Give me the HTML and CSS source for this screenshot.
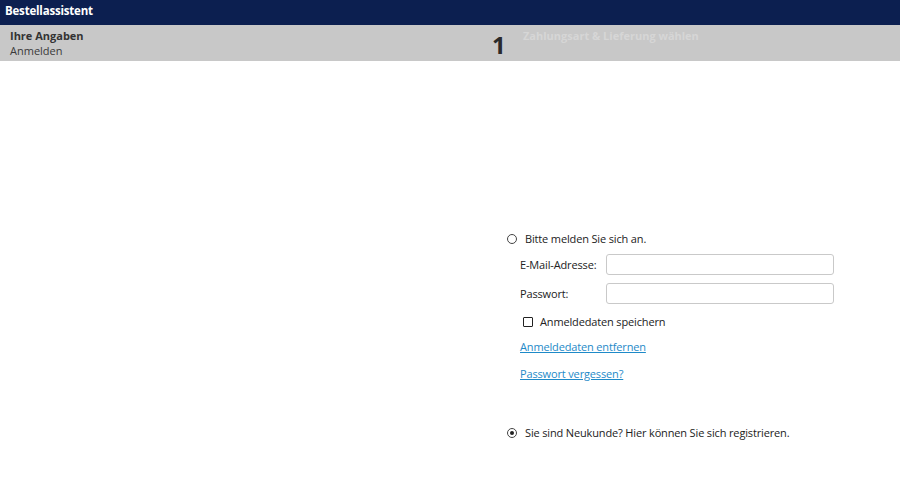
FILE: index.html
```html
<!DOCTYPE html>
<html lang="de">
<head>
<meta charset="utf-8">
<title>Bestellassistent</title>
<link rel="stylesheet" href="styles.css">
</head>
<body>
<header class="titlebar">Bestellassistent</header>
<nav class="steps">
  <div class="step current">
    <div class="step-title">Ihre Angaben</div>
    <div class="step-sub">Anmelden</div>
  </div>
  <div class="step-num">1</div>
  <div class="step next">
    <div class="step-title">Zahlungsart &amp; Lieferung wählen</div>
  </div>
</nav>
<main class="main">
  <div class="spacer"></div>
  <div class="form">
    <label class="option">
      <span class="radio"></span>
      <span>Bitte melden Sie sich an.</span>
    </label>
    <div class="fields">
      <div class="field">
        <span class="field-label">E-Mail-Adresse:</span>
        <span class="input"></span>
      </div>
      <div class="field">
        <span class="field-label">Passwort:</span>
        <span class="input"></span>
      </div>
      <label class="check-row">
        <span class="checkbox"></span>
        <span>Anmeldedaten speichern</span>
      </label>
      <a class="link" href="#">Anmeldedaten entfernen</a>
      <a class="link" href="#">Passwort vergessen?</a>
    </div>
    <label class="option option-new">
      <span class="radio checked"></span>
      <span>Sie sind Neukunde? Hier können Sie sich registrieren.</span>
    </label>
  </div>
</main>
</body>
</html>
```
FILE: styles.css
```css
html, body {
  margin: 0;
  padding: 0;
  background: #ffffff;
}
body {
  font-family: "Open Sans", "Noto Sans", sans-serif;
  font-size: 11px;
  color: #222222;
}
.titlebar {
  height: 25px;
  box-sizing: border-box;
  background: #0c1f50;
  color: #ffffff;
  font-weight: 700;
  font-size: 11.5px;
  line-height: 22px;
  padding-left: 5px;
  letter-spacing: -0.2px;
}
.steps {
  height: 36px;
  background: #c8c8c8;
  display: flex;
  align-items: flex-start;
}
.step.current {
  width: 482px;
  padding-left: 10px;
  padding-top: 4px;
  box-sizing: border-box;
}
.step-title {
  font-weight: 700;
  font-size: 11px;
  line-height: 14px;
  color: #333333;
}
.step-sub {
  font-size: 11px;
  line-height: 16px;
  color: #3a3a3a;
}
.step-num {
  width: 41px;
  font-size: 24px;
  font-weight: 700;
  color: #2a2a2a;
  line-height: 28px;
  padding-top: 6px;
  padding-left: 10px;
  box-sizing: border-box;
}
.step.next {
  padding-top: 4px;
}
.step.next .step-title {
  color: #d6d6d6;
}
.main {
  display: flex;
}
.spacer {
  width: 507px;
  flex: none;
}
.form {
  padding-top: 171px;
  display: flex;
  flex-direction: column;
  letter-spacing: -0.15px;
}
.option {
  display: flex;
  align-items: center;
  gap: 8px;
  font-size: 11px;
  line-height: 14px;
  color: #222222;
}
.radio {
  width: 10px;
  height: 10px;
  border: 1px solid #444444;
  border-radius: 50%;
  box-sizing: border-box;
  position: relative;
  flex: none;
}
.radio.checked::after {
  content: "";
  position: absolute;
  left: 2px;
  top: 2px;
  width: 4px;
  height: 4px;
  border-radius: 50%;
  background: #222222;
}
.fields {
  display: flex;
  flex-direction: column;
  padding-left: 13px;
  padding-top: 8px;
}
.field {
  display: flex;
  align-items: center;
  height: 21px;
  margin-bottom: 8px;
}
.field-label {
  width: 86px;
  flex: none;
}
.input {
  width: 228px;
  height: 21px;
  box-sizing: border-box;
  border: 1px solid #c9c9c9;
  border-radius: 3px;
  background: #ffffff;
}
.check-row {
  display: flex;
  align-items: center;
  gap: 7px;
  padding-left: 3px;
  margin-top: 3px;
  line-height: 14px;
}
.checkbox {
  width: 10px;
  height: 10px;
  border: 1px solid #222222;
  border-radius: 1px;
  box-sizing: border-box;
  flex: none;
}
.link {
  color: #1e8ac8;
  text-decoration: underline;
  line-height: 14px;
  margin-top: 11px;
  align-self: flex-start;
}
.link + .link {
  margin-top: 13px;
}
.option-new {
  margin-top: 45px;
}
```
